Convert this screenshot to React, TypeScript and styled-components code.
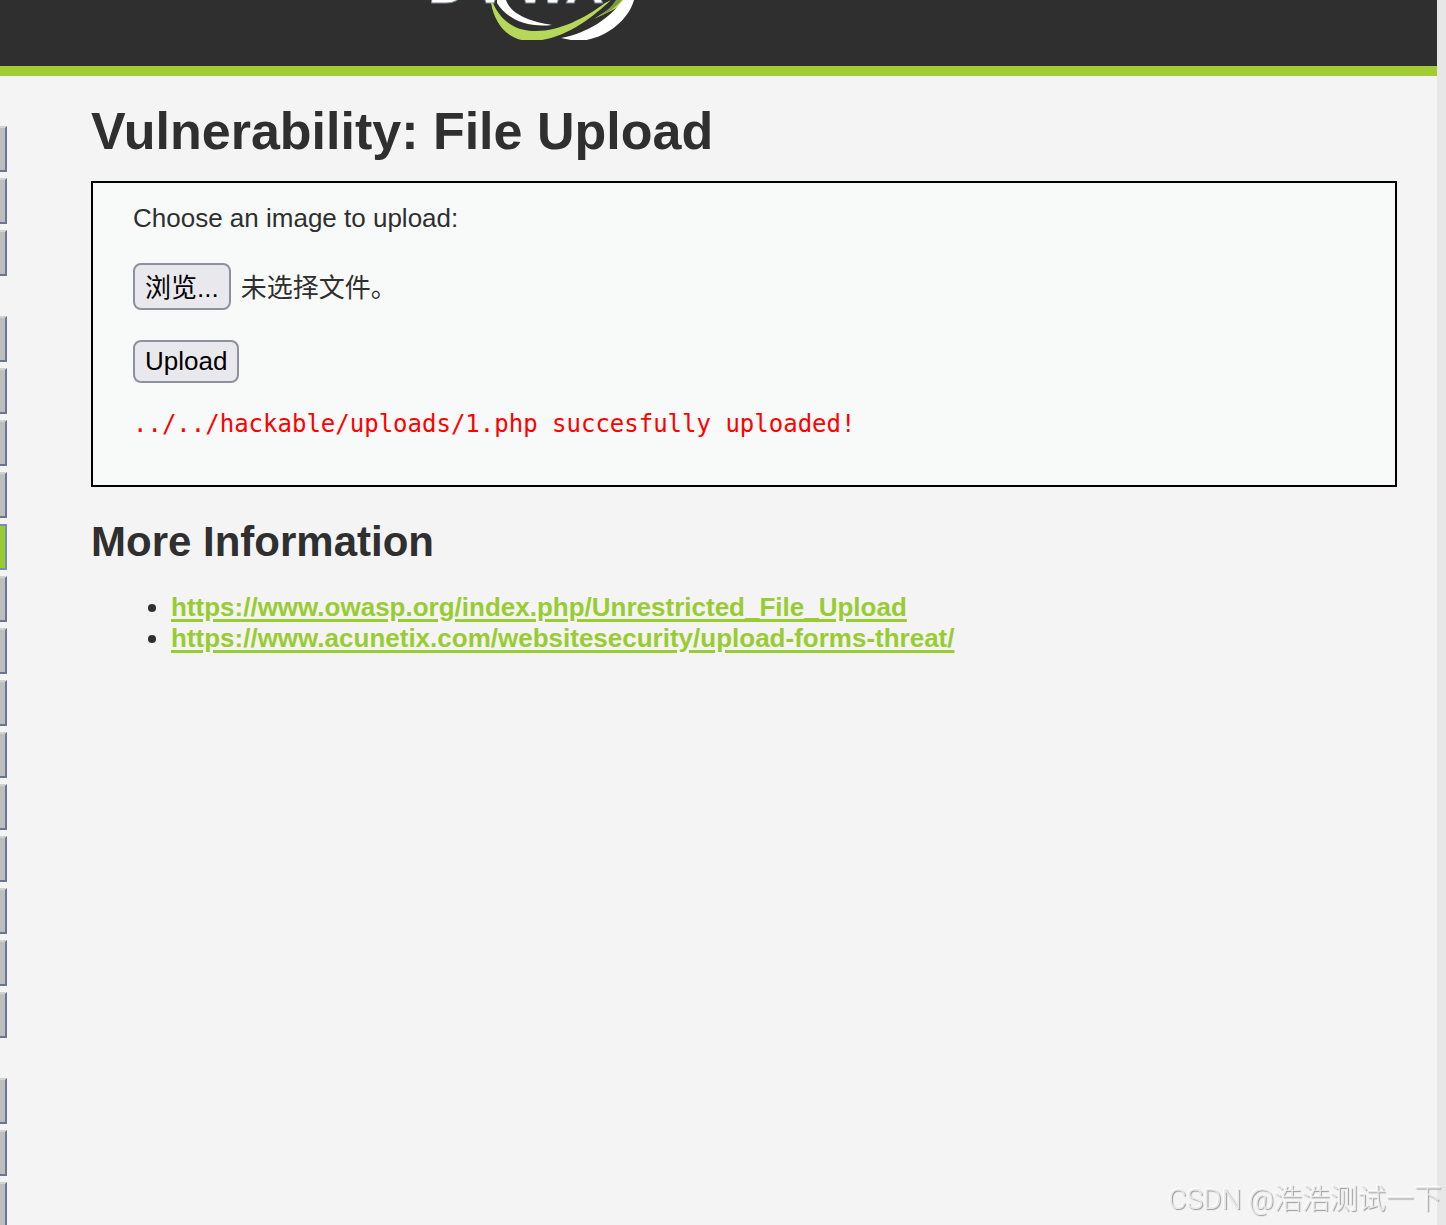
import React from "react";
import styled, { createGlobalStyle, css } from "styled-components";

const Global = createGlobalStyle`
  * { box-sizing: border-box; }
  html { background: #e7e7e7; }
  body {
    margin: 0;
    color: #2f2f2f;
    font: 26px/30px "Liberation Sans", "Noto Sans CJK SC", sans-serif;
  }
`;

const Page = styled.div`
  height: 100vh;
  overflow: hidden;
  margin-right: 9px;
  background: #f4f4f4;
`;

const Header = styled.header`
  height: 76px;
  background: #2f2f2f;
  border-bottom: 10px solid #a1cc33;
`;

const Logo = styled.svg`
  display: block;
  margin-left: 420px;
  overflow: hidden;
`;

const LogoText = styled.text`
  fill: #fff;
  stroke: #7f8798;
  stroke-width: 1px;
  font: bold 54px "Liberation Sans", sans-serif;
`;

const Columns = styled.div`
  display: grid;
  grid-template-columns: 7px 1fr;
  column-gap: 84px;
`;

const Menu = styled.nav`
  display: flex;
  flex-direction: column;
  gap: 40px;
  padding-top: 50px;
`;

const MenuGroup = styled.div`
  display: flex;
  flex-direction: column;
  gap: 6px;
`;

const MenuButton = styled.button<{ $active?: boolean }>`
  height: 46px;
  padding: 0;
  border: 2px solid #6b7690;
  border-left: 0;
  border-top-color: #d3d3d3;
  background: #bebebe;
  ${(p) =>
    p.$active &&
    css`
      border-color: #7590b4;
      background: #99cc33;
    `}
`;

const Main = styled.main`
  padding: 25px 40px 0 0;
`;

const Title = styled.h1`
  margin: 0 0 20px;
  font-size: 52px;
  line-height: 60px;
`;

const Subtitle = styled.h2`
  margin: 30px 0 25px;
  font-size: 42px;
  line-height: 50px;
`;

const Panel = styled.section`
  padding: 20px 40px 46px;
  border: 2px solid #000;
  background: #f8faf9;
`;

const Form = styled.form`
  display: flex;
  flex-direction: column;
  align-items: flex-start;
  gap: 30px;
`;

const FileRow = styled.div`
  display: flex;
  align-items: baseline;
  gap: 10px;
`;

const HiddenFile = styled.input`
  position: absolute;
  width: 1px;
  height: 1px;
  opacity: 0;
`;

const control = css`
  padding: 4px 10px;
  border: 2px solid #8f8f9d;
  border-radius: 8px;
  background: #e9e9ed;
  color: #000;
  font: inherit;
`;

const Browse = styled.label`
  ${control}
  padding-top: 6px;
  padding-bottom: 2px;
  line-height: 35px;
`;

const Submit = styled.button`
  ${control}
  line-height: 31px;
`;

const Result = styled.pre`
  margin: 26px 0 0;
  color: #f00;
  font: 24px/30px "DejaVu Sans Mono", monospace;
`;

const Links = styled.ul`
  margin: 0;
  padding-left: 80px;
  line-height: 31px;
`;

const Link = styled.a`
  color: #99cc33;
  font-weight: bold;
  text-decoration-thickness: 3px;
  text-underline-offset: 3px;
`;

const Watermark = styled.div`
  position: fixed;
  right: 4px;
  bottom: 7px;
  color: #e8e8e8;
  font: 300 28px/36px Roboto, "Noto Sans CJK SC", sans-serif;
  text-shadow: 1px 1px 1px #999, -1px -1px 1px #fff;
`;

const groups = [3, 14, 3];
const active = { group: 1, item: 4 };

const references = [
  "https://www.owasp.org/index.php/Unrestricted_File_Upload",
  "https://www.acunetix.com/websitesecurity/upload-forms-threat/",
];

export default function App() {
  return (
    <>
      <Global />
      <Page>
        <Header>
          <Logo width="230" height="40" viewBox="420 0 230 40" aria-hidden="true">
            <LogoText x="428 472 516 565" y="3">DVWA</LogoText>
            <path d="M491 3C495 26 510 41 530 41C562 41 591 19 611 0L605 3C585 18 560 31 536 31C513 31 500 19 493 3Z" fill="#b5d85a" />
            <path d="M594 19C606 13 617 9 628 0L619 0C610 9 603 13 594 19Z" fill="#b5d85a" />
            <path d="M616 0L622 0C613 10 604 15 598 17C606 12 611 7 616 0Z" fill="#7f9940" />
            <path d="M497 3C506 18 526 28 552 25C531 22 511 15 506 0L497 0Z" fill="#fff" />
            <path d="M634 0C628 22 602 41 576 41L561 38C588 33 610 18 623 0Z" fill="#fff" />
          </Logo>
        </Header>
        <Columns>
          <Menu>
            {groups.map((count, g) => (
              <MenuGroup key={g}>
                {Array.from({ length: count }, (_, i) => (
                  <MenuButton
                    key={i}
                    type="button"
                    $active={g === active.group && i === active.item}
                  />
                ))}
              </MenuGroup>
            ))}
          </Menu>
          <Main>
            <Title>Vulnerability: File Upload</Title>
            <Panel>
              <Form onSubmit={(e) => e.preventDefault()}>
                <label htmlFor="file">Choose an image to upload:</label>
                <FileRow>
                  <HiddenFile id="file" type="file" />
                  <Browse htmlFor="file">浏览...</Browse>
                  <span>未选择文件。</span>
                </FileRow>
                <Submit type="submit">Upload</Submit>
              </Form>
              <Result>../../hackable/uploads/1.php succesfully uploaded!</Result>
            </Panel>
            <Subtitle>More Information</Subtitle>
            <Links>
              {references.map((url) => (
                <li key={url}>
                  <Link href={url}>{url}</Link>
                </li>
              ))}
            </Links>
          </Main>
        </Columns>
      </Page>
      <Watermark>CSDN @浩浩测试一下</Watermark>
    </>
  );
}
